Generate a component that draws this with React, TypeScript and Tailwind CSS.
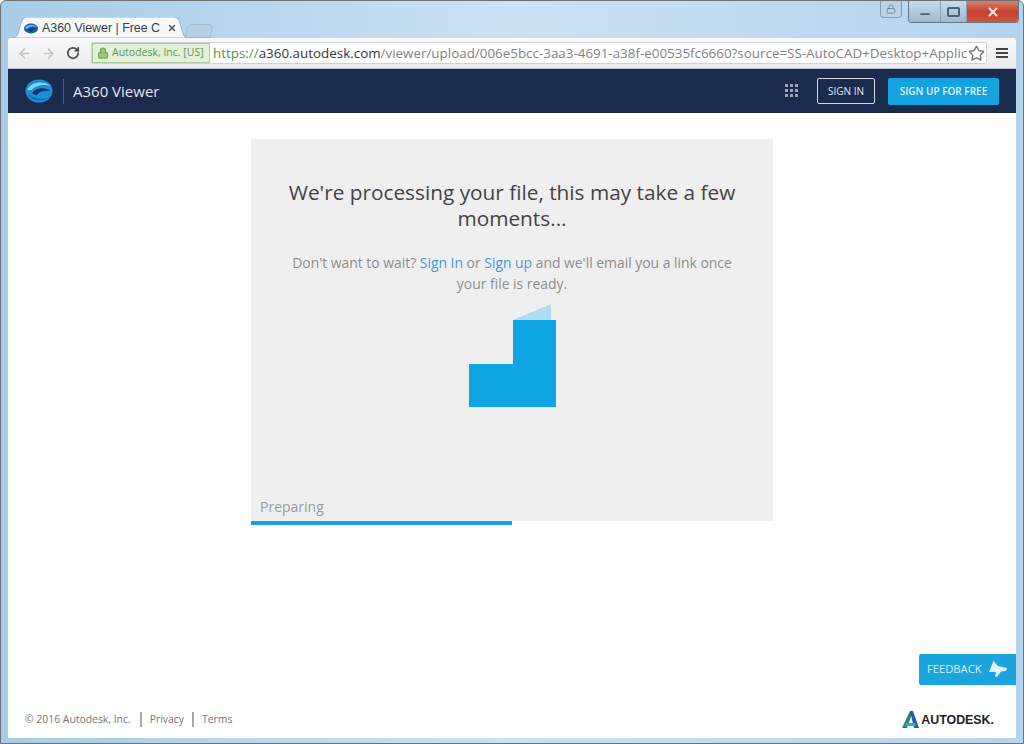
import { ArrowLeft, ArrowRight, RotateCw, Lock, Star, Minus, X } from 'lucide-react'

function A360Logo() {
  return (
    <svg width="28" height="26" viewBox="0 0 28 26" className="shrink-0">
      <ellipse cx="14" cy="13" rx="13.5" ry="11.5" fill="#1a8fd6" />
      <path d="M2 12 C6 4 18 2 26 8 C20 6 10 7 7 12 Z" fill="#7fd0f5" />
      <path d="M7 15 C11 9 21 9 25 13 C20 12 14 13 12 17 C10 17 8 16 7 15 Z" fill="#16305a" />
      <path d="M3 16 C6 22 16 25 23 20 C16 22 8 20 3 16 Z" fill="#0f6fb5" />
    </svg>
  )
}

function TabFavicon() {
  return (
    <svg width="14" height="11" viewBox="0 0 14 11" className="block">
      <ellipse cx="7" cy="5.5" rx="7" ry="5" fill="#1c5fae" />
      <path d="M1 5 C3 1 10 1 13 4 C9 3 5 3 3 6 Z" fill="#5fb6ea" />
      <path d="M4 7 C6 5 10 5 12 6 C10 6 8 7 7 9 Z" fill="#12305e" />
    </svg>
  )
}

function AppsGrid() {
  return (
    <svg width="14" height="14" viewBox="0 0 14 14" fill="#9aa3b5" className="block">
      {[0, 5, 10].map((y) =>
        [0, 5, 10].map((x) => <rect key={`${x}-${y}`} x={x} y={y} width="3" height="3" />)
      )}
    </svg>
  )
}

function FeedbackIcon() {
  return (
    <svg width="19" height="17" viewBox="0 0 19 17" fill="#e3f3fb" className="shrink-0">
      <path d="M4.5 0 L9 5 L18 7 L17 10 L12 10.5 L8 16 L6 15 L7 11 L0 11 Z" />
    </svg>
  )
}

function AutodeskMark() {
  return (
    <svg width="17" height="17" viewBox="0 0 17 17" className="shrink-0">
      <path d="M0 17 L8 0 L11 0 L5 17 Z" fill="#1f8a70" />
      <path d="M8 0 L11 0 L17 17 L12 17 Z" fill="#1b5fa8" />
      <path d="M4 12 L13 12 L14 15 L3 15 Z" fill="#3aa6c9" />
    </svg>
  )
}

export default function App() {
  return (
    <div className="w-[1024px] h-[744px] overflow-hidden flex flex-col px-[7px] pb-[5px] rounded-t-md border border-[#6d7276] bg-gradient-to-r from-[#a8cce8] via-[#cbe2f4] to-[#b4d3ec] font-['Open_Sans',sans-serif]">
      {/* window chrome */}
      <div className="h-[37px] shrink-0 flex items-start justify-between">
        <div className="flex items-end h-full pl-[5px]">
          <div className="relative w-[175px] h-[21px] flex items-center pl-[11px] pr-[10px] pt-[1px]">
            <svg className="absolute inset-0" width="175" height="21" viewBox="0 0 175 21">
              <path d="M0 21 C4 21 5 17 7 10 C9 2 10 0 15 0 L160 0 C165 0 166 2 168 10 C170 17 171 21 175 21 Z" fill="#f6f8fa" stroke="#9fb2c4" />
            </svg>
            <span className="relative mr-[4px] shrink-0"><TabFavicon /></span>
            <span className="relative w-[119px] overflow-hidden whitespace-nowrap text-[12.4px] text-[#3c3f44] font-['Liberation_Sans',sans-serif]">
              A360 Viewer | Free C
            </span>
            <X className="relative ml-[6px] shrink-0 text-[#555]" size={10} strokeWidth={3.5} />
          </div>
          <div className="w-[26px] h-[14px] -ml-[2px] rounded-t-[5px] -skew-x-12 bg-[#b6cfe4] border border-[#a2bbd1]" />
        </div>
        <div className="flex items-start -mr-[3px]">
          <div className="w-[22px] h-[17px] mr-[6px] rounded-b-[4px] border border-[#8a9dae] border-t-0 bg-[#bcd3e6] flex items-center justify-center">
            <Lock size={10} className="text-[#6d7d8c]" />
          </div>
          <div className="h-[22px] flex rounded-b-[4px] border border-[#64788a] border-t-0 overflow-hidden">
            <div className="w-[31px] flex items-center justify-center bg-gradient-to-b from-[#c7dcec] to-[#9fb8cd]">
              <Minus size={14} strokeWidth={3} className="text-[#4e5f6e] mt-[4px]" />
            </div>
            <div className="w-[27px] flex items-center justify-center border-x border-[#8ca2b4] bg-gradient-to-b from-[#c7dcec] to-[#9fb8cd]">
              <div className="w-[13px] h-[10px] border-2 border-[#4e5f6e] rounded-[2px]" />
            </div>
            <div className="w-[51px] flex items-center justify-center bg-gradient-to-b from-[#d98070] via-[#c8402e] to-[#c9563f]">
              <X size={14} strokeWidth={3.5} className="text-[#f3e3dc]" />
            </div>
          </div>
        </div>
      </div>

      {/* browser toolbar */}
      <div className="h-[31px] shrink-0 flex items-center pl-[9px] pr-[8px] rounded-t-[3px] bg-gradient-to-b from-[#f8f9fa] to-[#e9ebee] border-b border-[#b9c0c7]">
        <ArrowLeft size={15} strokeWidth={2.5} className="text-[#c3c6c9] shrink-0" />
        <ArrowRight size={15} strokeWidth={2.5} className="text-[#c3c6c9] ml-[9px] shrink-0" />
        <RotateCw size={14} strokeWidth={3} className="text-[#4a4a4a] ml-[10px] shrink-0" />
        <div className="ml-[11px] flex-1 min-w-0 h-[22px] flex items-center bg-white border border-[#d0d3d6] rounded-[2px]">
          <div className="h-full w-[118px] shrink-0 flex items-center gap-[3px] pl-[4px] bg-[#e3f0da] border border-[#a8cf95]">
            <Lock size={12} strokeWidth={2.5} fill="#9cc77f" className="text-[#74ad54] shrink-0" />
            <span className="text-[10.5px] text-[#5f9c49] whitespace-nowrap">Autodesk, Inc. [US]</span>
          </div>
          <div className="flex-1 min-w-0 overflow-hidden whitespace-nowrap pl-[3px] text-[13.4px] text-[#7f8286]">
            <span className="text-[#4e9a3e]">https://</span>
            <span className="text-[#33373b]">a360.autodesk.com</span>
            /viewer/upload/006e5bcc-3aa3-4691-a38f-e00535fc6660?source=SS-AutoCAD+Desktop+Applic
          </div>
          <Star size={17} className="text-[#777] shrink-0 mr-[1px]" />
        </div>
        <div className="ml-[9px] w-[12px] shrink-0 flex flex-col gap-[2px]">
          <div className="h-[2px] bg-[#444]" />
          <div className="h-[2px] bg-[#444]" />
          <div className="h-[2px] bg-[#444]" />
        </div>
      </div>

      {/* app header */}
      <header className="h-[44px] shrink-0 flex items-center bg-[#1a2b4d] pl-[17px] pr-[17px]">
        <A360Logo />
        <div className="w-px h-[25px] bg-[#4e5c78] ml-[10px]" />
        <span className="ml-[9px] text-[15px] text-[#e2e6ec]">A360 Viewer</span>
        <div className="ml-auto"><AppsGrid /></div>
        <button className="ml-[18px] w-[58px] h-[26px] border border-[#d5d9e0] rounded-[2px] text-[10px] text-[#e6e8ee]">SIGN IN</button>
        <button className="ml-[13px] w-[111px] h-[27px] bg-[#12a3e0] rounded-[2px] text-[10px] font-semibold text-[#e3f5fc]">SIGN UP FOR FREE</button>
      </header>

      {/* page */}
      <main className="relative flex-1 min-h-0 bg-white flex flex-col items-center pt-[26px]">
        <div className="w-[522px]">
          <div className="h-[382px] bg-[#efeff0] flex flex-col items-center pt-[40px]">
            <h1 className="w-[470px] text-center text-[20.8px] leading-[26px] text-[#444444]">
              We're processing your file, this may take a few moments...
            </h1>
            <p className="w-[460px] mt-[21px] text-center text-[13.9px] leading-[21px] text-[#8e8e8e]">
              Don't want to wait? <span className="text-[#3f9bd8]">Sign In</span> or{' '}
              <span className="text-[#3f9bd8]">Sign up</span> and we'll email you a link once your file is ready.
            </p>
            <svg className="mt-[10px] shrink-0" width="87" height="104" viewBox="0 0 87 104">
              <path d="M44 16 L82 0 L82 16 Z" fill="#afdcef" />
              <path d="M44 16 L87 16 L87 103 L0 103 L0 60 L44 60 Z" fill="#0fa5e2" />
            </svg>
            <div className="w-full mt-auto pl-[9px] pb-[4px] text-[14px] leading-[20px] text-[#9c9c9c]">Preparing</div>
          </div>
          <div className="w-1/2 h-[4px] bg-[#14a0df]" />
        </div>

        <button className="absolute right-0 bottom-[53px] w-[97px] h-[31px] pl-[8px] pr-[8px] flex items-center justify-between bg-[#1ba4dd] rounded-l-[2px] text-[11.2px] text-[#d6eff9]">
          FEEDBACK <FeedbackIcon />
        </button>

        <footer className="mt-auto w-full h-[38px] shrink-0 flex items-start justify-between pl-[17px] pr-[22px] pt-[11px]">
          <div className="flex items-center text-[10.4px] leading-[16px] text-[#777]">
            <span>© 2016 Autodesk, Inc.</span>
            <span className="ml-[9px] w-[2px] h-[15px] bg-[#a9a9a9]" />
            <span className="ml-[8px]">Privacy</span>
            <span className="ml-[8px] w-[2px] h-[15px] bg-[#a9a9a9]" />
            <span className="ml-[8px]">Terms</span>
          </div>
          <div className="flex items-center gap-[2px]">
            <AutodeskMark />
            <span className="text-[12.4px] leading-[16px] font-bold text-[#222] font-['Liberation_Sans',sans-serif]">AUTODESK.</span>
          </div>
        </footer>
      </main>
    </div>
  )
}
